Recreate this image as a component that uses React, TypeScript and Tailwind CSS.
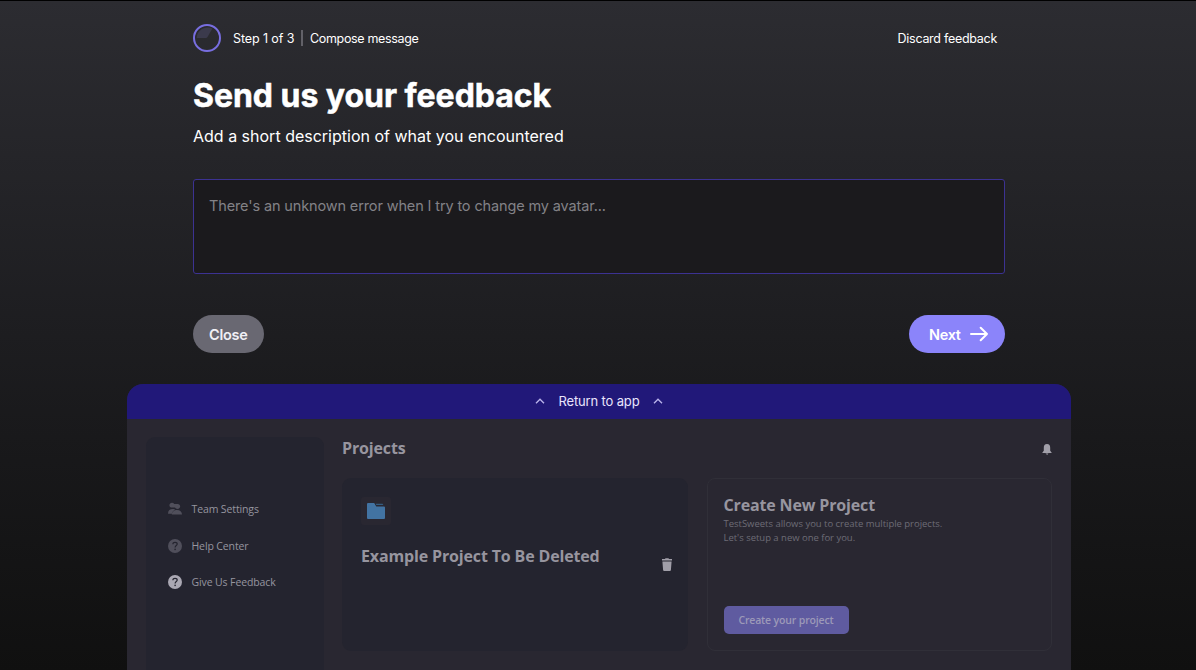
import type { ReactNode } from "react";

function ProgressRing() {
  return (
    <svg className="block size-7 shrink-0" viewBox="0 0 28 28" fill="none">
      <path d="M3.6 14 H13 Q14 14 14.5 13 L19.4 4.5 A11 11 0 0 0 3.6 14Z" fill="#3b3a4c" />
      <circle cx="14" cy="14" r="13" stroke="#786ee0" strokeWidth="2" />
    </svg>
  );
}

function Chevron() {
  return (
    <svg className="mb-[2px] block h-[6px] w-[10px]" viewBox="0 0 10 6" fill="none">
      <path d="M1 5.2 L5 1.2 L9 5.2" stroke="#b9b3ea" strokeWidth="1.4" />
    </svg>
  );
}

function PeopleIcon() {
  return (
    <svg className="block size-[14px]" viewBox="0 0 14 14" fill="#504f5b">
      <path d="M1.4 3.2 C1.4 1.7 2.6 .8 4 .8 C5 .8 5.7 1.2 6.2 1.9 H9.6 C11.2 1.9 12.2 3 12.2 4.3 C12.2 5.8 11 6.9 9.5 6.9 C8.3 6.9 7.4 6.3 7 5.5 H4 C2.5 5.5 1.4 4.6 1.4 3.2Z" />
      <path d="M0 11.7 C0 8.4 2 7 4.8 7 C6 7 6.8 7.4 7.2 8 C5.4 8.6 4.3 9.8 4 11.7Z" />
      <path d="M3.8 12.6 C3.8 9.6 6.2 7.9 9 7.9 C12 7.9 14 9.8 14 12.6Z" />
    </svg>
  );
}

function HelpIcon({ fill }: { fill: string }) {
  return (
    <svg className="block size-[14px]" viewBox="0 0 14 14" fill="none">
      <circle cx="7" cy="7" r="7" fill={fill} />
      <path d="M4.9 5.3 C4.9 4 5.8 3.3 7 3.3 C8.3 3.3 9.2 4 9.2 5.1 C9.2 6.5 7.1 6.6 7.1 8.4" stroke="#24242f" strokeWidth="1.2" />
      <circle cx="7.1" cy="10.4" r=".8" fill="#24242f" />
    </svg>
  );
}

function NavItem({ icon, children }: { icon: ReactNode; children: ReactNode }) {
  return (
    <div className="flex h-4 items-center gap-[9.5px] text-[10.5px] leading-4 font-medium tracking-[-0.12px] text-[#96959f]">
      {icon}
      <span className="whitespace-nowrap">{children}</span>
    </div>
  );
}

export default function App() {
  return (
    <div className="flex h-[670px] w-[1196px] flex-col overflow-hidden border-t border-black bg-linear-to-b from-[#2c2c31] via-[#1d1d20] to-[#101010] font-['Inter',sans-serif] text-white">
      <div className="ml-[193px] flex h-[383px] w-[812px] flex-col pt-[23px]">
        <div className="flex h-7 items-center text-[12.5px] leading-5">
          <ProgressRing />
          <span className="ml-3 w-[68px] pt-[2px] tracking-[-0.1px] whitespace-nowrap">Step 1 of 3</span>
          <span className="h-4 w-[2px] bg-[#626168]" />
          <span className="ml-[7px] pt-[2px] tracking-[-0.33px] whitespace-nowrap">Compose message</span>
          <span className="mr-2 ml-auto pt-[2px] tracking-[-0.28px] whitespace-nowrap">Discard feedback</span>
        </div>
        <h1 className="mt-6 h-10 text-[32px] leading-10 font-bold tracking-[-0.03px] whitespace-nowrap [-webkit-text-stroke:0.5px_white]">Send us your feedback</h1>
        <p className="mt-2 h-6 text-base leading-6 whitespace-nowrap">Add a short description of what you encountered</p>
        <textarea
          className="mt-[31px] block h-[95px] w-full shrink-0 resize-none rounded-[3px] border border-[#3c3292] bg-[#1b1a1d] px-[15px] py-[15px] text-[14.5px] leading-[22px] tracking-[-0.13px] outline-none placeholder:text-[#838287]"
          placeholder="There's an unknown error when I try to change my avatar..."
        />
        <div className="mt-[41px] flex h-[38px] justify-between text-[14.5px] font-semibold">
          <button className="flex h-[38px] w-[70.5px] items-center justify-center rounded-full bg-[#696872] pt-[2px] tracking-[-0.3px] text-[#f1f0f6]">Close</button>
          <button className="flex h-[38px] w-24 items-center rounded-full bg-[#8b84fa] pl-5">
            <span className="w-[41px] pt-[2px] text-left tracking-[-0.3px]">Next</span>
            <svg className="block h-4 w-[18px]" viewBox="0 0 18 16" fill="none" stroke="white" strokeWidth="2" strokeLinecap="round" strokeLinejoin="round">
              <path d="M1 8H17M10.7 1.8L17 8L10.7 14.2" />
            </svg>
          </button>
        </div>
      </div>

      <div className="ml-[127px] flex h-[286px] w-[944px] flex-col overflow-hidden rounded-t-[16px] bg-[#292731]">
        <div className="flex h-[35px] shrink-0 items-center justify-center gap-[14px] bg-[#211879] text-[13px] text-[#e9e5fc]">
          <Chevron />
          <span className="pt-px tracking-[-0.15px] whitespace-nowrap">Return to app</span>
          <Chevron />
        </div>
        <div className="flex flex-1 pt-[18px] pr-[19px] pl-[19px] font-['Open_Sans',sans-serif]">
          <aside className="flex h-[300px] w-[178px] shrink-0 flex-col gap-[20.5px] rounded-t-[9px] bg-[#24242f] pt-[64px] pl-[22px]">
            <NavItem icon={<PeopleIcon />}>Team Settings</NavItem>
            <NavItem icon={<HelpIcon fill="#504f5b" />}>Help Center</NavItem>
            <NavItem icon={<HelpIcon fill="#aaa8b3" />}>Give Us Feedback</NavItem>
          </aside>
          <main className="ml-[18px] w-[710px] tracking-[-0.15px]">
            <div className="flex h-[23px] items-center justify-between">
              <h2 className="text-base leading-[23px] font-bold text-[#97959f]">Projects</h2>
              <svg className="mt-px block h-[11px] w-[10px]" viewBox="0 0 10 11" fill="#a19fa9">
                <path d="M5 0 C7.4 0 8.2 1.7 8.2 3.8 V6.8 L9.6 8.4 V9 H.4 V8.4 L1.8 6.8 V3.8 C1.8 1.7 2.6 0 5 0ZM3.7 9.6 H6.3 C6.3 11.2 3.7 11.2 3.7 9.6Z" />
              </svg>
            </div>
            <div className="mt-[18px] flex gap-[19px]">
              <section className="h-[173px] w-[346px] rounded-[9px] bg-[#24242f] pt-[19px] pl-[19px]">
                <div className="flex h-7 w-[30px] items-center justify-center rounded-[3px] bg-[#292731]">
                  <svg className="block h-4 w-[18px]" viewBox="0 0 18 16">
                    <path d="M0 1 Q0 0 1 0 H7.2 L9.3 3.4 H17 Q18 3.4 18 4.4 V15 Q18 16 17 16 H1 Q0 16 0 15Z" fill="#4273a2" />
                    <path d="M8.6 .8 H15.6 L16.4 2 H9.3Z" fill="#355d81" />
                  </svg>
                </div>
                <div className="mt-[20px] flex justify-between pr-[16px]">
                  <h3 className="text-base leading-[23px] font-bold whitespace-nowrap text-[#97959f]">Example Project To Be Deleted</h3>
                  <svg className="mt-[13px] block h-[13px] w-[10px]" viewBox="0 0 10 13" fill="#a19fa9">
                    <path d="M0 1 H3 L3.5 .3 H6.5 L7 1 H10 V2.6 H0ZM.4 3.4 H9.6 L8.9 12 Q8.8 13 7.9 13 H2.1 Q1.2 13 1.1 12Z" />
                  </svg>
                </div>
              </section>
              <section className="flex h-[173px] w-[345px] flex-col items-start rounded-[8px] border border-[#302f38] pt-[15px] pl-[15.5px]">
                <h3 className="text-base leading-[23px] font-bold whitespace-nowrap text-[#97959f]">Create New Project</h3>
                <p className="text-[9.5px] leading-[14px] tracking-[-0.02px] whitespace-nowrap text-[#6d6c76]">TestSweets allows you to create multiple projects.<br />Let's setup a new one for you.</p>
                <button className="mt-[61px] h-[28px] w-[125px] shrink-0 rounded-[5px] bg-[#5f5ba0] pt-px text-[10.5px] font-semibold whitespace-nowrap text-[#9c99b8]">Create your project</button>
              </section>
            </div>
          </main>
        </div>
      </div>
    </div>
  );
}
